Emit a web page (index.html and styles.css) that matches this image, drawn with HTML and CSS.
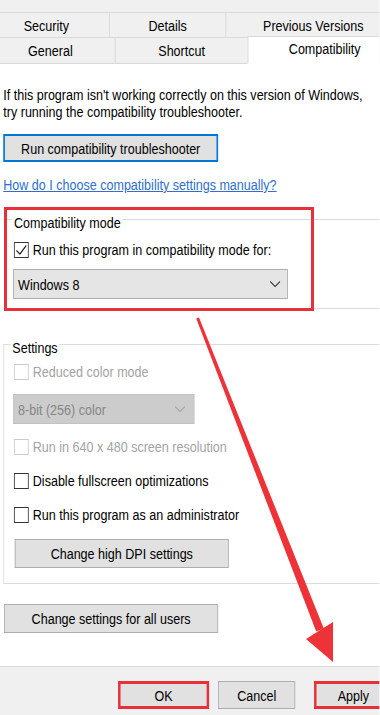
FILE: index.html
```html
<!DOCTYPE html>
<html>
<head>
<meta charset="utf-8">
<title>Compatibility</title>
<link rel="stylesheet" href="styles.css">
</head>
<body>
<div class="dlg">
  <div class="tabs">
    <div class="tabrow row1">
      <div class="tab t-sec">Security</div>
      <div class="tab t-det">Details</div>
      <div class="tab t-prev">Previous Versions</div>
    </div>
    <div class="tabrow row2">
      <div class="tab t-gen">General</div>
      <div class="tab t-sho">Shortcut</div>
      <div class="tab t-comp selected">Compatibility</div>
    </div>
  </div>

  <div class="page">
    <p class="intro">If this program isn't working correctly on this version of Windows,<br>try running the compatibility troubleshooter.</p>
    <button class="btn btn-focus btn-trouble">Run compatibility troubleshooter</button>
    <a class="link" href="#">How do I choose compatibility settings manually?</a>

    <div class="group g-compat">
      <span class="legend">Compatibility mode</span>
      <div class="cb cb-compat">
        <span class="box"><svg width="16" height="14" viewBox="0 0 16 14"><polyline points="2,7.5 6.3,11 14,2.5" fill="none" stroke="#222" stroke-width="1.3"/></svg></span>
        <span>Run this program in compatibility mode for:</span>
      </div>
      <div class="select sel-win">
        <span>Windows 8</span>
        <svg class="chev" width="13" height="7" viewBox="0 0 13 7"><polyline points="0.5,0.5 6.5,5.5 12.5,0.5" fill="none" stroke="#333" stroke-width="1.1"/></svg>
      </div>
    </div>

    <div class="group g-settings">
      <span class="legend">Settings</span>
      <div class="cb dis cb-first"><span class="box"></span><span>Reduced color mode</span></div>
      <div class="select select-dis sel-color">
        <span>8-bit (256) color</span>
        <svg class="chev" width="13" height="7" viewBox="0 0 13 7"><polyline points="0.5,0.5 6.5,5.5 12.5,0.5" fill="none" stroke="#a6a6a6" stroke-width="1.1"/></svg>
      </div>
      <div class="cb dis cb-res"><span class="box"></span><span>Run in 640 x 480 screen resolution</span></div>
      <div class="cb cb-gap"><span class="box"></span><span>Disable fullscreen optimizations</span></div>
      <div class="cb cb-gap"><span class="box"></span><span>Run this program as an administrator</span></div>
      <button class="btn btn-dpi">Change high DPI settings</button>
    </div>

    <button class="btn btn-all">Change settings for all users</button>
  </div>

  <div class="footer">
    <button class="btn fbtn b-ok hl">OK</button>
    <button class="btn fbtn b-cancel">Cancel</button>
    <button class="btn fbtn b-apply hl">Apply</button>
  </div>
</div>

<div class="redbox"></div>
<svg class="arrow" width="380" height="715" viewBox="0 0 380 715">
  <polygon points="196.2,318.6 199,317.4 323.8,628.4 316.2,631.6" fill="#ee3338"/>
  <polygon points="306,639 333,622 333,662" fill="#ee3338"/>
</svg>
</body>
</html>
```
FILE: styles.css
```css
* { box-sizing: border-box; margin: 0; padding: 0; }
html, body { width: 380px; height: 715px; overflow: hidden; background: #fff; }
body {
  position: relative;
  font-family: "Liberation Sans", Arial, sans-serif;
  font-size: 15.3px;
  line-height: 17px;
  color: #000;
}
/* the dialog is laid out wide and squeezed horizontally, like the reference capture */
.dlg {
  width: 463px;
  height: 715px;
  display: flex;
  flex-direction: column;
  overflow: hidden;
  transform: scaleX(0.82);
  transform-origin: 0 0;
}

/* tabs */
.tabs { background: #f0f0f0; padding-top: 12px; flex: none; overflow: hidden; }
.tabrow { display: flex; white-space: nowrap; }
.row1 { height: 25px; }
.row2 { height: 27px; }
.tab {
  flex: none;
  display: flex; align-items: center; justify-content: center;
  background: #f0f0f0;
  border: 1px solid #d9d9d9;
  margin-left: -1px;
}
.row1 .tab { border-bottom: none; }
.t-sec { margin-left: 0; border-left: none; width: 134px; padding-right: 20px; }
.t-det { width: 143px; }
.t-prev { width: 188px; padding-left: 25px; border-right: none; }
.t-gen { margin-left: 0; border-left: none; width: 141px; padding-right: 17px; }
.t-sho { width: 163px; }
.t-comp { width: 161px; padding-left: 26px; border-right: none; }
.tab.selected {
  background: #fff;
  margin-top: -1px;
  height: 28px;
  border-bottom: 1px solid #fff;
  padding-bottom: 3px;
}

/* page */
.page { flex: 1; display: flex; flex-direction: column; align-items: flex-start; background: #fff; overflow: hidden; }
.intro { margin: 22px 0 0 4px; white-space: nowrap; }
.btn {
  font: inherit;
  color: #000;
  background: #e1e1e1;
  border: 1px solid #adadad;
  display: flex; align-items: center; justify-content: center;
  white-space: nowrap;
}
.btn-focus { border: 2px solid #0078d7; border-left-width: 2.4px; border-right-width: 2.4px; }
.btn-trouble { margin: 14px 0 0 4px; width: 262px; height: 28px; }
.link { margin: 14px 0 0 4px; color: #2f6fcc; text-decoration: underline; white-space: nowrap; }

.group {
  position: relative;
  border: 1px solid #dcdcdc;
  border-right: none;
}
.legend {
  position: absolute;
  top: -6px;
  left: 8px;
  padding: 0 2px;
  background: #fff;
  white-space: nowrap;
}
.g-compat { margin: 26px 0 0 6px; width: 457px; padding: 21px 0 9px 0; }
.g-settings { margin: 35px 0 0 4px; width: 459px; padding: 18px 0 15px 0; }

.cb { display: flex; align-items: center; height: 17px; white-space: nowrap; }
.box {
  flex: none;
  width: 18px; height: 16px;
  border: 1px solid #333;
  border-left-width: 1.2px; border-right-width: 1.2px;
  background: #fff;
  margin-right: 5px;
  display: flex; align-items: center; justify-content: center;
}
.g-compat .cb { margin-left: 10px; }
.g-settings .cb { margin-left: 12px; }
.dis { color: #a3a3a3; }
.dis .box { border-color: #cbcbcb; }
.cb-res { margin-top: 14px; }
.cb-gap { margin-top: 17px; }

.select {
  display: flex; align-items: center; justify-content: space-between;
  height: 30px;
  background: #e5e5e5;
  border: 1px solid #adadad;
  padding: 0 8px 0 5px;
  white-space: nowrap;
}
.sel-win { margin: 11px 0 0 9px; width: 335px; }
.select-dis { background: #cccccc; border-color: #c2c2c2; color: #868686; }
.sel-color { margin: 14px 0 0 11px; width: 221px; padding-right: 10px; }

.btn-dpi { margin: 16px 0 0 13px; width: 261px; height: 29px; }
.btn-all { margin: 20px 0 0 5px; width: 261px; height: 29px; }

/* footer */
.footer {
  flex: none;
  height: 49px;
  background: #f0f0f0;
  border-top: 1px solid #dadada;
  display: flex;
  align-items: flex-start;
  padding: 14px 0 0 144px;
  overflow: hidden;
}
.fbtn { height: 28px; flex: none; }
.b-ok { width: 111px; }
.b-cancel { width: 94px; margin-left: 11px; }
.b-apply { width: 80px; margin-left: 23px; padding-left: 13px; }
.hl { border-color: #e8303a; border-style: solid; border-width: 3px 3.7px; }
.b-apply.hl { border-right-width: 0; }

/* annotations drawn over the capture */
.redbox {
  position: absolute;
  left: 4px; top: 207px;
  width: 310px; height: 104px;
  border: 3px solid #e8303a;
}
.arrow { position: absolute; left: 0; top: 0; pointer-events: none; }
```
